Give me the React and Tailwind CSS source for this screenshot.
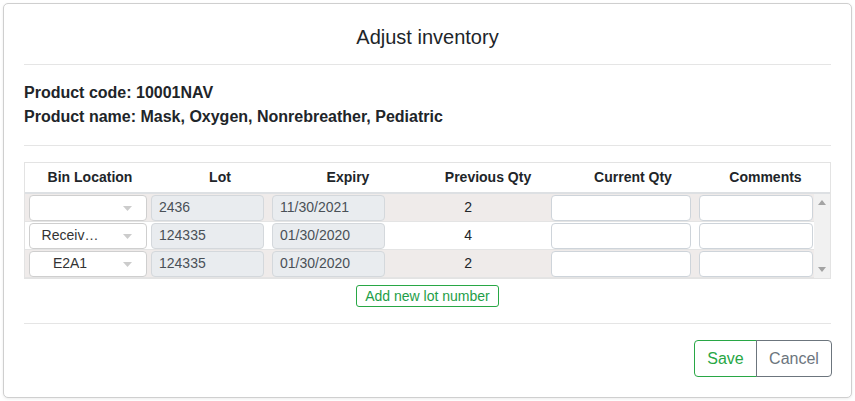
import React from "react";

const rows = [
  { bin: "", lot: "2436", exp: "11/30/2021", qty: "2", bg: "bg-[#efebea]" },
  { bin: "Receiv…", lot: "124335", exp: "01/30/2020", qty: "4", bg: "bg-white" },
  { bin: "E2A1", lot: "124335", exp: "01/30/2020", qty: "2", bg: "bg-[#efebea]" },
];

function Select({ value }) {
  return (
    <div className="relative h-[26px] w-[118px] rounded-[4px] border border-[#cfcfcf] bg-white">
      <div className="absolute left-[12px] top-0 flex h-full w-[56px] items-center justify-center overflow-hidden whitespace-nowrap text-[14px] text-[#333]">
        {value}
      </div>
      <svg className="absolute right-[14px] top-[10px]" width="9" height="5" viewBox="0 0 9 5">
        <path d="M0 0 L9 0 L4.5 5 Z" fill="#cccccc" />
      </svg>
    </div>
  );
}

function Disabled({ value, w }) {
  return (
    <div className={`flex h-[26px] ${w} items-center rounded-[4px] border border-[#d4d8dc] bg-[#e9ecef] pl-[7px] text-[14px] text-[#495057]`}>
      {value}
    </div>
  );
}

function Input({ w }) {
  return <div className={`h-[26px] ${w} rounded-[4px] border border-[#ced4da] bg-white`} />;
}

export default function App() {
  return (
    <div className="relative h-[401px] w-[855px] overflow-hidden bg-white" style={{ fontFamily: '"Liberation Sans", Arial, sans-serif' }}>
      <div className="absolute left-[3px] top-[3px] h-[395px] w-[849px] rounded-[5px] border border-[#cfcfcf] bg-white shadow-[0_1px_3px_rgba(0,0,0,0.08)]">
        <div className="px-[20px]">
          <div className="flex h-[61px] items-center justify-center border-b border-[#e5e5e5] pt-[6px] text-[20px] text-[#212529]">
            Adjust inventory
          </div>
          <div className="pt-[16px] text-[16px] font-bold leading-[24px] text-[#212529]">
            <div>Product code: 10001NAV</div>
            <div>Product name: Mask, Oxygen, Nonrebreather, Pediatric</div>
          </div>
          <div className="mt-[16px] border-b border-[#e5e5e5]" />

          <div className="mt-[16px] border border-[#e3e3e3]">
            <div className="grid h-[31px] grid-cols-[130px_130px_126px_154px_136px_1fr] items-center border-b-2 border-[#dde0e3] text-[14px] font-bold text-[#212529]">
              <div className="text-center">Bin Location</div>
              <div className="text-center">Lot</div>
              <div className="text-center">Expiry</div>
              <div className="text-center">Previous Qty</div>
              <div className="text-center">Current Qty</div>
              <div className="text-center">Comments</div>
            </div>
            <div className="flex">
              <div className="flex-1">
                {rows.map((r, i) => (
                  <div key={i} className={`grid h-[28px] grid-cols-[124px_119px_121px_158px_148px_1fr] items-center border-b border-[#e4e4e4] ${r.bg}`}>
                    <div className="pl-[4px]"><Select value={r.bin} /></div>
                    <div className="pl-[2px]"><Disabled value={r.lot} w="w-[113px]" /></div>
                    <div className="pl-[4px]"><Disabled value={r.exp} w="w-[113px]" /></div>
                    <div className="pr-[75px] text-right text-[14px] text-[#212529]">{r.qty}</div>
                    <div className="pl-[4px]"><Input w="w-[140px]" /></div>
                    <div className="pl-[4px]"><Input w="w-[114px]" /></div>
                  </div>
                ))}
              </div>
              <div className="relative w-[16px] bg-[#f1f1f1]">
                <svg className="absolute left-[4px] top-[6px]" width="8" height="5" viewBox="0 0 8 5">
                  <path d="M0 5 L8 5 L4 0 Z" fill="#a3a3a3" />
                </svg>
                <svg className="absolute bottom-[6px] left-[4px]" width="8" height="5" viewBox="0 0 8 5">
                  <path d="M0 0 L8 0 L4 5 Z" fill="#a3a3a3" />
                </svg>
              </div>
            </div>
          </div>

          <div className="mt-[6px] flex justify-center">
            <button className="h-[22px] rounded-[3px] border border-[#28a745] px-[8px] text-[14px] leading-[20px] text-[#1e9e48]">
              Add new lot number
            </button>
          </div>
          <div className="mt-[16px] border-b border-[#e5e5e5]" />
          <div className="-mr-px mt-[16px] flex justify-end">
            <button className="h-[37px] w-[63px] rounded-l-[4px] border border-[#28a745] text-[16px] text-[#28a745]">Save</button>
            <button className="-ml-px h-[37px] w-[76px] rounded-r-[4px] border border-[#6c757d] text-[16px] text-[#6c757d]">Cancel</button>
          </div>
        </div>
      </div>
    </div>
  );
}
